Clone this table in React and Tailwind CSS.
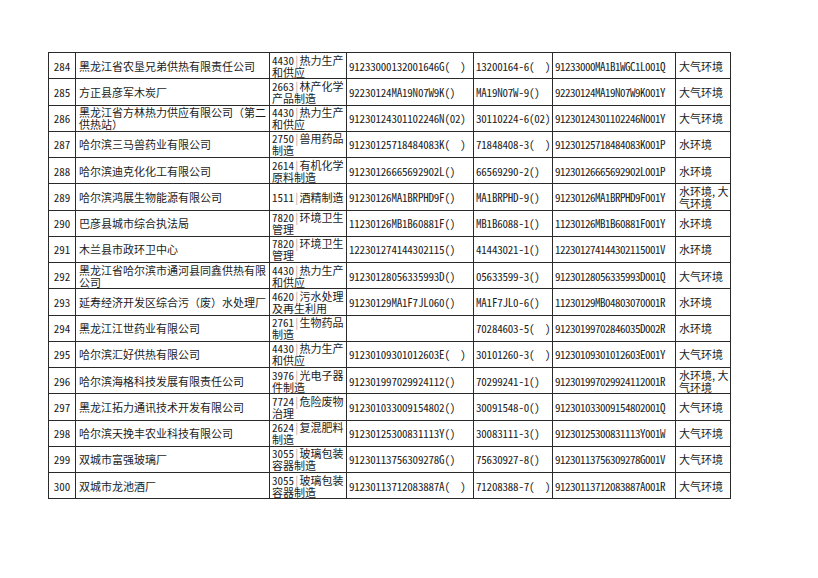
import React from "react";

const rows = [
  ["284", "黑龙江省农垦兄弟供热有限责任公司", "4430", "热力生产和供应", "91233000132001646G(  )", "13200164-6(  )", "91233000MA1B1WGC1L001Q", "大气环境"],
  ["285", "方正县彦军木炭厂", "2663", "林产化学产品制造", "92230124MA19N07W9K()", "MA19N07W-9()", "92230124MA19N07W9K001Y", "大气环境"],
  ["286", "黑龙江省方林热力供应有限公司（第二供热站）", "4430", "热力生产和供应", "91230124301102246N(02)", "30110224-6(02)", "91230124301102246N001Y", "大气环境"],
  ["287", "哈尔滨三马兽药业有限公司", "2750", "兽用药品制造", "91230125718484083K(  )", "71848408-3(  )", "91230125718484083K001P", "水环境"],
  ["288", "哈尔滨迪克化化工有限公司", "2614", "有机化学原料制造", "91230126665692902L()", "66569290-2()", "91230126665692902L001P", "水环境"],
  ["289", "哈尔滨鸿展生物能源有限公司", "1511", "酒精制造", "91230126MA1BRPHD9F()", "MA1BRPHD-9()", "91230126MA1BRPHD9F001Y", "水环境, 大气环境"],
  ["290", "巴彦县城市综合执法局", "7820", "环境卫生管理", "11230126MB1B60881F()", "MB1B6088-1()", "11230126MB1B60881F001Y", "水环境"],
  ["291", "木兰县市政环卫中心", "7820", "环境卫生管理", "122301274144302115()", "41443021-1()", "122301274144302115001V", "水环境"],
  ["292", "黑龙江省哈尔滨市通河县同鑫供热有限公司", "4430", "热力生产和供应", "91230128056335993D()", "05633599-3()", "91230128056335993D001Q", "大气环境"],
  ["293", "延寿经济开发区综合污（废）水处理厂", "4620", "污水处理及再生利用", "91230129MA1F7JL060()", "MA1F7JL0-6()", "11230129MB04803070001R", "水环境"],
  ["294", "黑龙江江世药业有限公司", "2761", "生物药品制造", "", "70284603-5(  )", "91230199702846035D002R", "水环境"],
  ["295", "哈尔滨汇好供热有限公司", "4430", "热力生产和供应", "91230109301012603E(  )", "30101260-3(  )", "91230109301012603E001Y", "大气环境"],
  ["296", "哈尔滨海格科技发展有限责任公司", "3976", "光电子器件制造", "912301997029924112()", "70299241-1()", "912301997029924112001R", "水环境, 大气环境"],
  ["297", "黑龙江拓力通讯技术开发有限公司", "7724", "危险废物治理", "912301033009154802()", "30091548-0()", "912301033009154802001Q", "大气环境"],
  ["298", "哈尔滨天挽丰农业科技有限公司", "2624", "复混肥料制造", "91230125300831113Y()", "30083111-3()", "91230125300831113Y001W", "大气环境"],
  ["299", "双城市富强玻璃厂", "3055", "玻璃包装容器制造", "91230113756309278G()", "75630927-8()", "91230113756309278G001V", "大气环境"],
  ["300", "双城市龙池酒厂", "3055", "玻璃包装容器制造", "91230113712083887A(  )", "71208388-7(  )", "91230113712083887A001R", "大气环境"],
];

const cell = "border-r border-b border-[#2a2a2a] overflow-hidden flex items-center";
const half = "[font-feature-settings:'hwid']";

export default function App() {
  return (
    <div className="w-[818px] h-[578px] bg-white pt-[52px] pl-[48px] text-[#1c1c1c] text-[11px] leading-[12px] font-['Noto_Sans_CJK_SC',sans-serif]">
      <div className="w-[683px] border-l border-t border-[#2a2a2a]">
        {rows.map((r) => (
          <div key={r[0]} className="grid grid-cols-[27px_194px_77px_127px_79px_123px_55px] h-[26.25px]">
            <div className={`${cell} ${half} justify-center`}>{r[0]}</div>
            <div className={`${cell} pl-[3px]`}>{r[1]}</div>
            <div className={`${cell} pl-[2px]`}>
              <span>
                <span className={half}>{r[2]}</span>
                <span className={`${half} text-[#aaa]`}>|</span>
                {r[3]}
              </span>
            </div>
            <div className={`${cell} ${half} pl-[2px] whitespace-pre tracking-[-0.2px]`}>{r[4]}</div>
            <div className={`${cell} ${half} pl-[2px] whitespace-pre tracking-[-0.2px]`}>{r[5]}</div>
            <div className={`${cell} ${half} pl-[2px] whitespace-pre tracking-[-0.5px]`}>{r[6]}</div>
            <div className={`${cell} pl-[3px]`}>{r[7]}</div>
          </div>
        ))}
      </div>
    </div>
  );
}
